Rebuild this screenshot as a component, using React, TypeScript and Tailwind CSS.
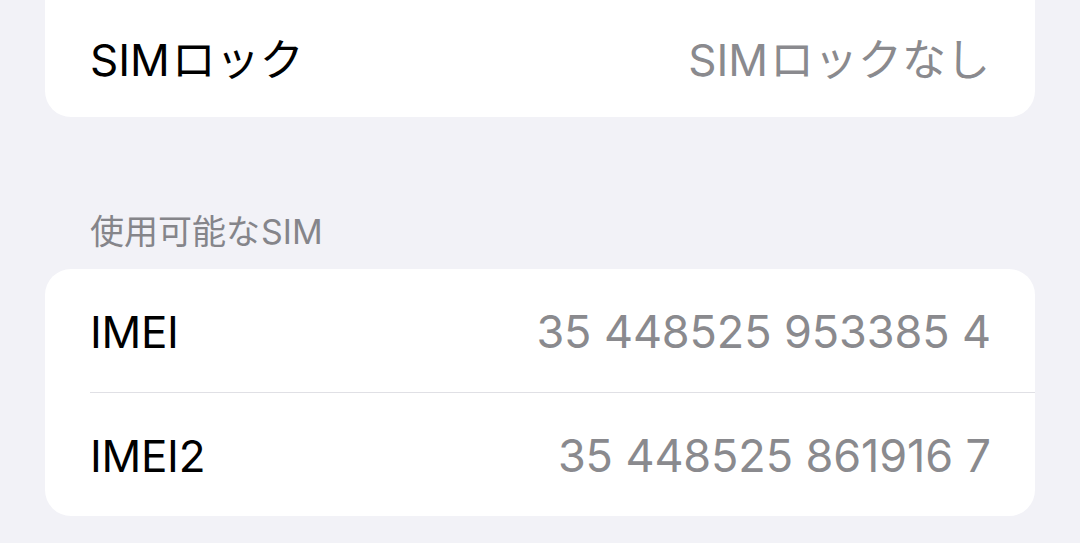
type Row = { label: string; value: string };

const simRows: Row[] = [
  { label: "IMEI", value: "35 448525 953385 4" },
  { label: "IMEI2", value: "35 448525 861916 7" },
];

const font = "font-['Inter','Noto_Sans_CJK_JP',sans-serif]";

function InfoRow({ label, value }: Row) {
  return (
    <div className="flex h-[123px] items-center justify-between pr-[44px] pt-[2px]">
      <span className="text-[44px] tracking-[-0.3px] text-black">{label}</span>
      <span className="text-[45px] tracking-[-0.1px] text-[#8a8a8e]">{value}</span>
    </div>
  );
}

export default function App() {
  return (
    <div className={`${font} h-[543px] w-full overflow-hidden bg-[#f2f2f7] px-[45px]`}>
      {/* SIM lock card, its top runs off the screen */}
      <div className="flex h-[117px] items-center justify-between rounded-b-[26px] bg-white px-[45px] pt-[2px]">
        <span className="text-[44px] text-black">
          SIM<span className="ml-[2px]">ロック</span>
        </span>
        <span className="text-[44px] text-[#8a8a8e]">
          SIM<span className="ml-[2px]">ロックなし</span>
        </span>
      </div>

      <div className="px-[45px] pb-[14px] pt-[92px] text-[34px] leading-[46px] text-[#85858a]">
        使用可能な<span className="ml-[1px]">SIM</span>
      </div>

      <div className="rounded-[26px] bg-white pl-[45px]">
        {simRows.map((row, i) => (
          <div key={row.label}>
            {i > 0 && <div className="h-px bg-[#e0e0e5]" />}
            <InfoRow {...row} />
          </div>
        ))}
      </div>
    </div>
  );
}
